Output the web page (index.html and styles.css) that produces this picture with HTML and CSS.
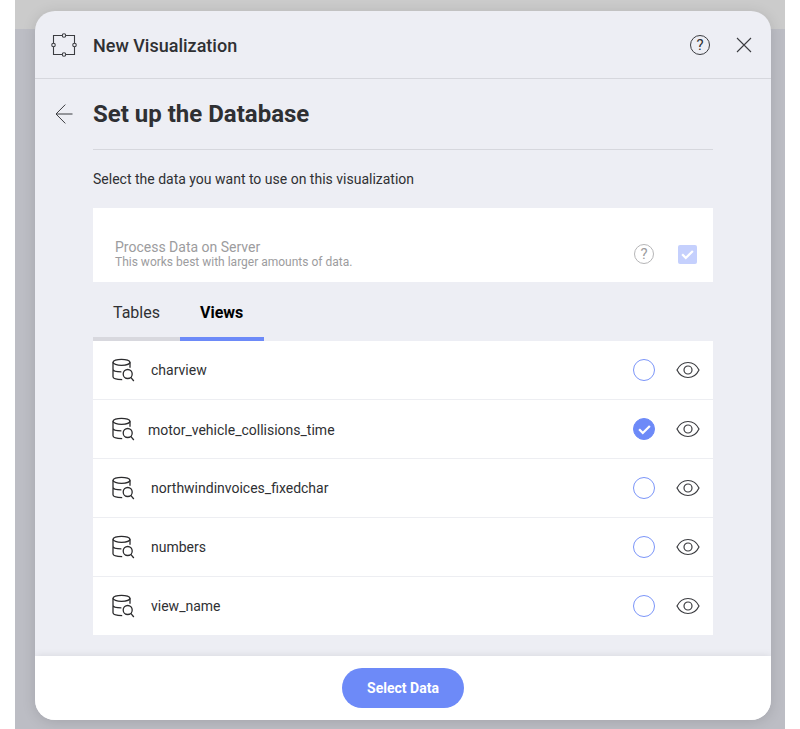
FILE: index.html
```html
<!DOCTYPE html>
<html lang="en">
<head>
<meta charset="utf-8">
<title>New Visualization</title>
<link rel="stylesheet" href="styles.css">
</head>
<body>
<svg class="symbols" width="0" height="0">
  <symbol id="db" viewBox="0 0 23 24">
    <ellipse cx="9.500" cy="4.300" rx="8.500" ry="3"/>
    <path d="M1 4.300v14.500c0 1.800 3.600 2.800 9.200 2.800M18 4.300v5.500M1 11.200c0 1.800 3.600 2.600 8.400 2.700"/>
    <circle cx="15.700" cy="16" r="4.500"/>
    <path d="M18.800 19.400l3 3.600"/>
  </symbol>
  <symbol id="eye" viewBox="0 0 24 18">
    <path d="M1 9C3.300 4.300 7.300 1.500 12 1.500S20.700 4.300 23 9C20.700 13.700 16.700 16.500 12 16.500S3.300 13.700 1 9z"/>
    <circle cx="12" cy="9" r="4"/>
  </symbol>
</svg>
<div class="backdrop">
  <main class="dialog">
    <header class="header">
      <svg class="logo" viewBox="0 0 26 24">
        <path d="M2.500 2.500h21v19h-21z"/>
        <g class="knobs"><circle cx="13" cy="2.500" r="1.750"/><circle cx="2.500" cy="12" r="1.750"/><circle cx="23.500" cy="12" r="1.750"/><circle cx="13" cy="21.500" r="1.750"/></g>
      </svg>
      <h1>New Visualization</h1>
      <span class="help">?</span>
      <svg class="close" viewBox="0 0 16 16"><path d="M1 1l14 14M15 1L1 15"/></svg>
    </header>
    <section class="body">
      <div class="title">
        <svg class="back" viewBox="0 0 18 20"><path d="M10.300 .6L1 10l9.300 9.400M1 10h16.500"/></svg>
        <h2>Set up the Database</h2>
      </div>
      <div class="content">
        <p class="prompt">Select the data you want to use on this visualization</p>
        <div class="option">
          <div class="option-text"><div class="option-name">Process Data on Server</div><div class="option-note">This works best with larger amounts of data.</div></div>
          <span class="help">?</span>
          <span class="checkbox"><svg viewBox="0 0 14 14"><path d="M2 6.700l3.400 3.500L12 3.700"/></svg></span>
        </div>
        <nav class="tabs"><span class="tab">Tables</span><span class="tab active">Views</span></nav>
        <ul class="list">
          <li><svg class="db"><use href="#db"/></svg><span class="name">charview</span><span class="radio"></span><svg class="eye"><use href="#eye"/></svg></li>
          <li><svg class="db"><use href="#db"/></svg><span class="name chosen">motor_vehicle_collisions_time</span><span class="radio on"><svg viewBox="0 0 14 14"><path d="M2 6.700l3.400 3.500L12 3.700"/></svg></span><svg class="eye"><use href="#eye"/></svg></li>
          <li><svg class="db"><use href="#db"/></svg><span class="name">northwindinvoices_fixedchar</span><span class="radio"></span><svg class="eye"><use href="#eye"/></svg></li>
          <li><svg class="db"><use href="#db"/></svg><span class="name">numbers</span><span class="radio"></span><svg class="eye"><use href="#eye"/></svg></li>
          <li><svg class="db"><use href="#db"/></svg><span class="name">view_name</span><span class="radio"></span><svg class="eye"><use href="#eye"/></svg></li>
        </ul>
      </div>
    </section>
    <footer class="footer"><button>Select Data</button></footer>
  </main>
</div>
</body>
</html>
```
FILE: styles.css
```css
* { box-sizing: border-box; }
body { margin: 0; background: #fff; font-family: Roboto, sans-serif; color: #2f3033; }
h1, h2, p, ul { margin: 0; padding: 0; }
svg { display: block; flex: none; fill: none; stroke: #3b3c40; }
.symbols { position: absolute; }
.backdrop { width: 770px; height: 729px; margin-left: 15px; padding: 11px 14px 9px 20px; overflow: hidden; background: linear-gradient(#cbcbcb 29px, #bcbdc4 29px); }
.dialog { display: flex; flex-direction: column; width: 736px; height: 709px; border-radius: 20px; overflow: hidden; background: #edeef4; box-shadow: 0 2px 14px rgba(0, 0, 0, .13); }
.header { display: flex; align-items: center; height: 68px; flex: none; padding: 0 19px 0 16px; border-bottom: 1px solid #d6d7dd; }
.logo { width: 26px; height: 24px; stroke-width: 1.1; }
.knobs { fill: #edeef4; }
h1 { flex: 1; margin: 2px 0 0 16px; font-size: 18px; line-height: 24px; font-weight: 500; }
.help { display: block; width: 20px; height: 20px; border: 1px solid #3b3c40; border-radius: 50%; font-size: 15px; line-height: 19px; text-align: center; }
.close { width: 16px; height: 16px; margin-left: 26px; stroke-width: 1.1; }
.body { flex: 1; }
.title { display: flex; align-items: center; height: 70px; padding-left: 20px; }
.back { width: 18px; height: 20px; stroke-width: 1; }
h2 { margin-left: 20px; font-size: 24px; line-height: 32px; font-weight: 700; }
.content { width: 620px; margin-left: 58px; border-top: 1px solid #d6d7dd; }
.prompt { height: 58px; padding-top: 19px; font-size: 14px; line-height: 20px; }
.option { display: flex; align-items: center; height: 74px; padding: 18px 16px 0 22px; background: #fff; color: #9c9c9e; }
.option-text { flex: 1; padding-top: 2px; }
.option-name { font-size: 14px; line-height: 15px; }
.option-note { font-size: 12px; line-height: 15px; }
.option .help { border-color: #b5b5b7; }
.checkbox { display: flex; align-items: center; justify-content: center; width: 19px; height: 19px; margin-left: 24px; border-radius: 2px; background: #c5d0fd; }
.checkbox svg, .radio svg { width: 15px; height: 15px; stroke: #fff; stroke-width: 2.1; }
.tabs { display: flex; height: 59px; font-size: 16px; line-height: 61px; }
.tab { width: 87px; padding-left: 20px; border-bottom: 4px solid #d8d8de; }
.tab.active { width: 84px; border-color: #6d8af8; color: #000; font-weight: 700; }
.list { list-style: none; background: #fff; }
.list li { display: flex; align-items: center; height: 59px; padding: 0 14px 0 18px; border-bottom: 1px solid #edeef2; }
.list li:last-child { height: 58px; border: 0; }
.db { width: 23px; height: 24px; margin-left: 1px; stroke: #2b2b2d; stroke-width: 1.3; }
.name { flex: 1; margin-left: 16px; font-size: 14px; line-height: 20px; }
.name.chosen { margin: 2px 0 0 13px; }
.radio { display: flex; align-items: center; justify-content: center; width: 22px; height: 22px; margin-right: 21px; border: 1px solid #7b95f9; border-radius: 50%; }
.radio.on { background: #6d8af8; border-color: #6d8af8; }
.eye { width: 24px; height: 18px; margin: 0 -1px 0 0; stroke-width: 1.2; }
.footer { display: flex; align-items: center; justify-content: center; height: 64px; flex: none; background: #fff; box-shadow: 0 0 8px rgba(0, 0, 0, .1); }
button { width: 122px; height: 40px; padding: 0; border: 0; border-radius: 20px; background: #6d8af8; color: #fff; font: 700 14px Roboto, sans-serif; }
```
